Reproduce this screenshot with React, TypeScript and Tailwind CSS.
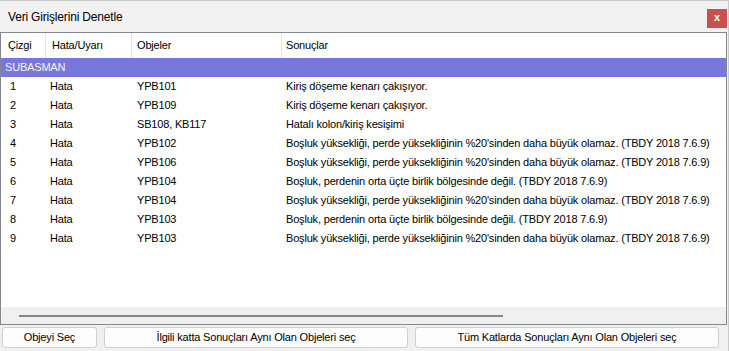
type Row = { no: number; kind: string; obj: string; result: string };

const LONG = "Boşluk yüksekliği, perde yüksekliğinin %20'sinden daha büyük olamaz. (TBDY 2018 7.6.9)";
const MID = 'Boşluk, perdenin orta üçte birlik bölgesinde değil. (TBDY 2018 7.6.9)';

const rows: Row[] = [
  { no: 1, kind: 'Hata', obj: 'YPB101', result: 'Kiriş döşeme kenarı çakışıyor.' },
  { no: 2, kind: 'Hata', obj: 'YPB109', result: 'Kiriş döşeme kenarı çakışıyor.' },
  { no: 3, kind: 'Hata', obj: 'SB108, KB117', result: 'Hatalı kolon/kiriş kesişimi' },
  { no: 4, kind: 'Hata', obj: 'YPB102', result: LONG },
  { no: 5, kind: 'Hata', obj: 'YPB106', result: LONG },
  { no: 6, kind: 'Hata', obj: 'YPB104', result: MID },
  { no: 7, kind: 'Hata', obj: 'YPB104', result: LONG },
  { no: 8, kind: 'Hata', obj: 'YPB103', result: MID },
  { no: 9, kind: 'Hata', obj: 'YPB103', result: LONG },
];

const cols = 'grid grid-cols-[45px_86px_150px_1fr]';

export default function App() {
  return (
    <div
      className="flex h-[351px] w-[729px] flex-col overflow-hidden border-t border-r border-[#c9c9c9] bg-[#f0f0f0] text-[11px] tracking-[-0.18px] text-black"
      style={{ fontFamily: '"Liberation Sans", Arial, sans-serif' }}
    >
      {/* Title bar */}
      <div className="flex h-[31px] shrink-0 items-center justify-between bg-[#f2f2f2] pl-[8px] pr-[1px]">
        <span className="text-[12px]">Veri Girişlerini Denetle</span>
        <button className="mt-[3px] flex h-[19px] w-[20px] items-center justify-center bg-[#c9504f] pb-[2px] text-[11px] font-bold text-white">
          x
        </button>
      </div>

      {/* List */}
      <div className="mr-[1px] flex h-[293px] shrink-0 flex-col border border-[#838790] bg-white">
        <div className={`${cols} h-[25px] shrink-0 items-center`}>
          <div className="flex h-full items-center border-r border-[#e5e5e5] pl-[7px]">Çizgi</div>
          <div className="flex h-full items-center border-r border-[#e5e5e5] pl-[6px]">Hata/Uyarı</div>
          <div className="flex h-full items-center border-r border-[#e5e5e5] pl-[5px]">Objeler</div>
          <div className="flex h-full items-center pl-[4px]">Sonuçlar</div>
        </div>
        <div className="flex h-[19px] shrink-0 items-center bg-[#7878dc] pl-[4px] text-[#f4f4f4]">SUBASMAN</div>
        <div className="flex-1">
          {rows.map((r) => (
            <div key={r.no} className={`${cols} h-[19px] items-center whitespace-nowrap`}>
              <div className="pl-[9px]">{r.no}</div>
              <div className="pl-[4px]">{r.kind}</div>
              <div className="pl-[5px]">{r.obj}</div>
              <div className="pl-[4px]">{r.result}</div>
            </div>
          ))}
        </div>
        {/* Horizontal scrollbar */}
        <div className="flex h-[17px] shrink-0 items-center bg-[#f0f0f0] pl-[18px]">
          <div className="h-[2px] w-[484px] bg-[#858585]" />
        </div>
      </div>

      {/* Buttons */}
      <div className="flex gap-[7px] pl-[2px] pt-[2px]">
        <button className="h-[21px] w-[95px] rounded-[3px] border border-[#d0d0d0] bg-[#fdfdfd]">Objeyi Seç</button>
        <button className="h-[21px] w-[304px] rounded-[3px] border border-[#d0d0d0] bg-[#fdfdfd]">
          İlgili katta Sonuçları Aynı Olan Objeleri seç
        </button>
        <button className="h-[21px] w-[304px] rounded-[3px] border border-[#d0d0d0] bg-[#fdfdfd]">
          Tüm Katlarda Sonuçları Aynı Olan Objeleri seç
        </button>
      </div>
    </div>
  );
}
